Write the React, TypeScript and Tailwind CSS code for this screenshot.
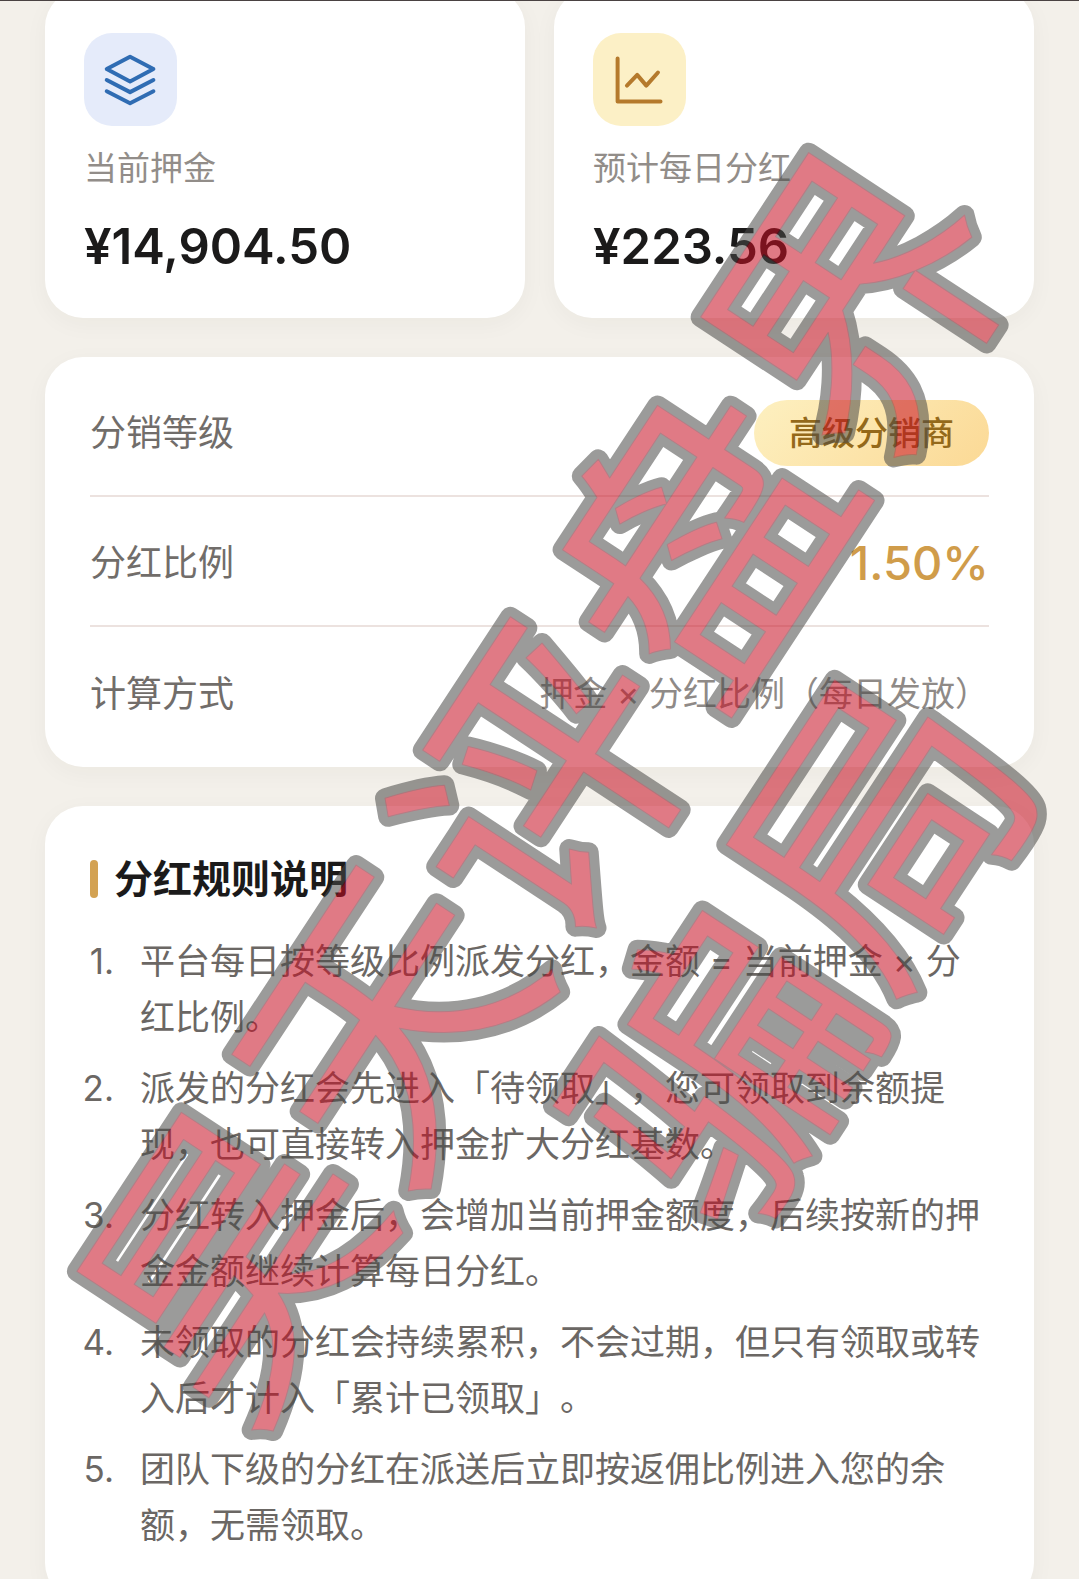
import type { ReactNode } from "react";

const rules = [
  "平台每日按等级比例派发分红，金额 = 当前押金 × 分红比例。",
  "派发的分红会先进入「待领取」，您可领取到余额提现，也可直接转入押金扩大分红基数。",
  "分红转入押金后，会增加当前押金额度，后续按新的押金金额继续计算每日分红。",
  "未领取的分红会持续累积，不会过期，但只有领取或转入后才计入「累计已领取」。",
  "团队下级的分红在派送后立即按返佣比例进入您的余额，无需领取。",
];

function LayersIcon() {
  return (
    <svg viewBox="0 0 24 24" className="size-14" fill="none" stroke="#2f6cb3" strokeWidth="1.7" strokeLinecap="round" strokeLinejoin="round" aria-hidden="true">
      <path d="M11.6 2 1.6 7.3l10 5.3 10-5.3z" />
      <path d="m1.6 12 10 5.2 10-5.2" />
      <path d="m1.6 16.8 10 5.2 10-5.2" />
    </svg>
  );
}

function ChartIcon() {
  return (
    <svg viewBox="0 0 24 24" className="size-14" fill="none" stroke="#b57a2c" strokeWidth="1.7" strokeLinecap="round" strokeLinejoin="round" aria-hidden="true">
      <path d="M2.4 2.8v18.4h18.4" />
      <path d="m6.4 14.4 4.4-4.6 3.9 4.6 5-5.6" />
    </svg>
  );
}

function StatCard({ icon, tint, label, value }: { icon: ReactNode; tint: string; label: string; value: string }) {
  return (
    <section className="flex-1 rounded-[38px] bg-white px-[39px] pt-[44px] pb-[40px] shadow-[0_6px_24px_rgba(60,40,20,0.04)]">
      <div className={`flex size-[93px] items-center justify-center rounded-[28px] ${tint}`}>{icon}</div>
      <h2 className="mt-[18px] text-[33px] leading-[48px] text-[#928d89]">{label}</h2>
      <p className="mt-[24px] text-[49px] leading-[62px] font-semibold text-[#1b1a1a]">{value}</p>
    </section>
  );
}

function Row({ label, children }: { label: string; children: ReactNode }) {
  return (
    <div className="flex h-[130px] items-center justify-between border-b-2 border-[#ece2df] pt-1 last:border-b-0">
      <dt className="text-[36px] leading-[52px] text-[#716d6a]">{label}</dt>
      <dd>{children}</dd>
    </div>
  );
}

function Watermark() {
  return (
    <svg
      viewBox="0 0 1079 1579"
      className="pointer-events-none absolute top-0 left-0 w-full overflow-visible font-['Noto_Sans_CJK_SC',sans-serif] text-[286px] opacity-55"
      strokeLinejoin="round"
      textAnchor="middle"
    >
      <use href="#mark" fill="#4a4a48" stroke="#4a4a48" strokeWidth="20" />
      <g fill="#c80f23" stroke="#7a1222" strokeWidth="1">
        <g id="mark">
          <text transform="translate(530 771) rotate(-56.7)" y="124">
            昊天评盘界
          </text>
          <text transform="translate(787 936) rotate(-56.7)" y="124">
            骗局
          </text>
        </g>
      </g>
    </svg>
  );
}

export default function App() {
  return (
    <div className="relative h-screen overflow-hidden border-t border-[#4a4242] bg-[#f3f0ea] font-['Inter','Noto_Sans_CJK_SC',sans-serif] [text-spacing-trim:space-all]" lang="zh-CN">
      <main className="-mt-3 flex flex-col gap-[39px] px-[45px]">
        <div className="flex gap-[29px]">
          <StatCard icon={<LayersIcon />} tint="bg-[#e5ebfa]" label="当前押金" value="¥14,904.50" />
          <StatCard icon={<ChartIcon />} tint="bg-[#fcf0c6]" label="预计每日分红" value="¥223.56" />
        </div>

        <dl className="rounded-[38px] bg-white px-[45px] py-[10px] shadow-[0_6px_24px_rgba(60,40,20,0.04)]">
          <Row label="分销等级">
            <span className="block rounded-full bg-linear-135 from-[#fdf0c0] to-[#fbd995] px-[35px] text-[33px] leading-[66px] font-medium text-[#94691a]">高级分销商</span>
          </Row>
          <Row label="分红比例">
            <span className="text-[47px] leading-[62px] font-medium text-[#d09c4a]">1.50%</span>
          </Row>
          <Row label="计算方式">
            <span className="text-[34px] leading-[48px] text-[#8f8a87]">押金 × 分红比例（每日发放）</span>
          </Row>
        </dl>

        <section className="rounded-[38px] bg-white px-[45px] pt-[45px] pb-[48px] shadow-[0_6px_24px_rgba(60,40,20,0.04)]">
          <h2 className="flex items-center gap-4 text-[39px] leading-[56px] font-bold text-[#1b1a1a]">
            <span className="h-[38px] w-2 rounded-full bg-[#d3a253]" />
            分红规则说明
          </h2>
          <ol className="mt-[26px] flex flex-col gap-[15px] text-[35px] leading-[56px] text-[#6b6764]">
            {rules.map((rule, i) => (
              <li key={rule} className="flex">
                <span className="mr-[26px] -ml-2 w-8 shrink-0 text-right">{i + 1}.</span>
                <span className="flex-1">{rule}</span>
              </li>
            ))}
          </ol>
        </section>
      </main>

      <Watermark />
    </div>
  );
}
